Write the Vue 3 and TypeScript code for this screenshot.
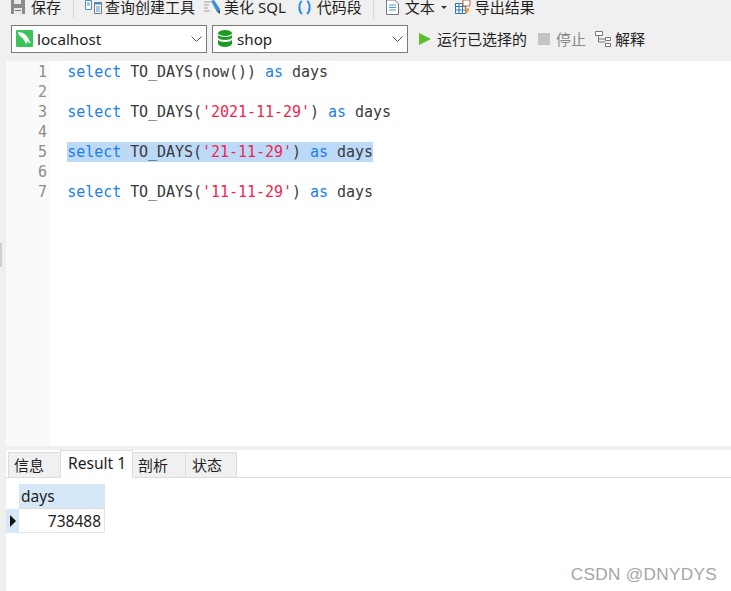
<script setup lang="ts">
type Tok = { t: string; c: string }
const K = 'kw', P = 'pl', S = 'st'
const mk = (d: string): Tok[] => [
  { t: 'select', c: K }, { t: ' TO_DAYS(', c: P },
  ...(d ? [{ t: `'${d}'`, c: S }] : [{ t: 'now()', c: P }]),
  { t: ')', c: P }, { t: ' ', c: P }, { t: 'as', c: K }, { t: ' days', c: P },
]
const lines: { toks: Tok[]; sel?: boolean }[] = [
  { toks: mk('') }, { toks: [] },
  { toks: mk('2021-11-29') }, { toks: [] },
  { toks: mk('21-11-29'), sel: true }, { toks: [] },
  { toks: mk('11-11-29') },
]
</script>

<template>
  <div class="app">
    <div class="bar1">
      <span class="tool t-save">
        <svg width="14" height="14" viewBox="0 0 14 14"><path d="M0 0h14v14H0z" fill="#8a8a8a"/><path d="M3 0h7v4H3z" fill="#e8e8e8"/><path d="M3 8h8v6H3z" fill="#e8e8e8"/><path d="M4 10h6v1H4z" fill="#777"/></svg>
        <span>保存</span>
      </span>
      <i class="sep"></i>
      <span class="tool t-q">
        <svg width="17" height="14" viewBox="0 0 17 14"><path d="M.5.500h6v9h-6z" fill="#fff" stroke="#4a8fd0"/><path d="M2 3h3M2 5h3" stroke="#4a8fd0"/><path d="M9.500 2.500h7v11h-7z" fill="#fff" stroke="#777"/><path d="M9.500 2.500h7v2h-7z" fill="#4a8fd0"/><path d="M11 7h4M11 9h4M11 11h4" stroke="#4a8fd0"/></svg>
        <span>查询创建工具</span>
      </span>
      <span class="tool t-b">
        <svg width="17" height="15" viewBox="0 0 17 15"><path d="M0 2h7M0 5h5M0 8h4M0 11h6" stroke="#a5a5a5"/><path d="M7 1l3-1 6 9-3 3z" fill="#3c8ed8"/><path d="M13 12l3-3 0 5z" fill="#555"/></svg>
        <span>美化 SQL</span>
      </span>
      <span class="tool t-c">
        <svg width="15" height="15" viewBox="0 0 15 15" fill="none" stroke="#2f8de4" stroke-width="2"><path d="M5 1C1.500 3 1.500 11 5 14"/><path d="M10 1c3.500 2 3.500 10 0 13"/></svg>
        <span>代码段</span>
      </span>
      <i class="sep s2"></i>
      <span class="tool t-t">
        <svg width="13" height="15" viewBox="0 0 13 15"><path d="M.5 0h8l4 4v10.500H.5z" fill="#fff" stroke="#777"/><path d="M3 5h7M3 7.500h7M3 10h7" stroke="#4a9ae0"/></svg>
        <span>文本</span>
        <i class="caret"></i>
      </span>
      <span class="tool t-e">
        <svg width="17" height="15" viewBox="0 0 17 15"><path d="M.5 3.500h10v10H.5z" fill="#fff" stroke="#2d78c0"/><path d="M.5 3.500h10v3H.5zM4 3.500v10M7.500 3.500v10M.5 10h10" fill="none" stroke="#2d78c0"/><path d="M8 0h7v6H8z" fill="#fff" stroke="#d0603a"/><path d="M13 8v3h-3M10 11l2-2M10 11l2 2" fill="none" stroke="#f0912a" stroke-width="1.500"/></svg>
        <span>导出结果</span>
      </span>
    </div>

    <div class="bar2">
      <div class="sel s-host">
        <svg class="ic" width="17" height="17" viewBox="0 0 17 17"><rect width="17" height="17" rx="1" fill="#3cc45c"/><path d="M2 2c4 0 8 2 10 6 1 2 2 4 3 5-2 0-3-1-4-2 0 1 0 2-1 3-1-3-3-6-6-8-1-1-2-2-2-4z" fill="#fff"/></svg>
        <span class="val">localhost</span>
        <svg class="chev" width="11" height="6" viewBox="0 0 11 6" fill="none" stroke="#555"><path d="M.5.500l5 5 5-5"/></svg>
      </div>
      <div class="sel s-db">
        <svg class="ic" width="14" height="17" viewBox="0 0 14 17" fill="#1e9b24"><ellipse cx="7" cy="3" rx="7" ry="3"/><path d="M0 5c2 2.500 12 2.500 14 0v3c-2 2.500-12 2.500-14 0zM0 10c2 2.500 12 2.500 14 0v4c-2 4-12 4-14 0z"/></svg>
        <span class="val">shop</span>
        <svg class="chev" width="11" height="6" viewBox="0 0 11 6" fill="none" stroke="#555"><path d="M.5.500l5 5 5-5"/></svg>
      </div>
      <span class="act a-run"><i class="play"></i><span>运行已选择的</span></span>
      <span class="act a-stop"><i class="stop"></i><span>停止</span></span>
      <span class="act a-exp">
        <svg width="16" height="16" viewBox="0 0 16 16" fill="#fff" stroke="#777"><path d="M.5.500h7v4h-7zM10.500 6.500h5v3h-5zM10.500 12.500h5v3h-5z"/><path d="M3.500 4.500v6.500h7M3.500 8h7" fill="none"/></svg>
        <span>解释</span>
      </span>
    </div>

    <div class="main">
      <div class="strip"><i class="grip"></i></div>
      <div class="body">
        <div class="editor">
          <div class="gutter">
            <div v-for="(_, i) in lines" :key="i" class="num">{{ i + 1 }}</div>
          </div>
          <div class="code">
            <div v-for="(l, i) in lines" :key="i" class="line">
              <span :class="{ sel2: l.sel }"><span v-for="(k, j) in l.toks" :key="j" :class="k.c">{{ k.t }}</span></span>
            </div>
          </div>
        </div>
        <div class="split"></div>
        <div class="tabs">
          <span class="tab first">信息</span>
          <span class="tab active">Result 1</span>
          <span class="tab t3">剖析</span>
          <span class="tab t4">状态</span>
        </div>
        <div class="results">
          <div class="grid">
            <div class="corner"></div><div class="head">days</div>
            <div class="mark"><i class="tri"></i></div><div class="cell">738488</div>
          </div>
          <div class="wm">CSDN @DNYDYS</div>
        </div>
      </div>
    </div>
  </div>
</template>

<style>
html, body { margin: 0; background: #f0f0f0; }
</style>

<style scoped>
.app { width: 731px; height: 591px; overflow: hidden; background: #f0f0f0; display: flex; flex-direction: column; font-family: "Noto Sans", "Noto Sans CJK SC", sans-serif; font-size: 15px; color: #1e1e1e; }
.bar1 { height: 18px; flex: none; display: flex; align-items: flex-end; overflow: hidden; position: relative; }
.tool { display: inline-flex; align-items: center; height: 24px; line-height: 24px; white-space: nowrap; margin-bottom: -1px; flex: none; }
.tool svg { flex: none; }
.sep { width: 1px; height: 18px; background: #d6d6d6; flex: none; }
.t-save { margin-left: 11px; gap: 6px; }
.bar1 > .sep { margin-left: 12px; }
.t-q { margin-left: 11px; gap: 3px; }
.t-b { margin-left: 9px; gap: 3px; }
.t-c { margin-left: 11px; gap: 5px; }
.bar1 > .s2 { margin-left: 11px; }
.t-t { margin-left: 12px; gap: 6px; }
.caret { width: 0; height: 0; border: 3px solid transparent; border-top: 3px solid #333; border-bottom: 0; }
.t-e { margin-left: 8px; gap: 3px; }
.bar2 { height: 43px; flex: none; display: flex; align-items: center; padding-bottom: 2px; box-sizing: border-box; padding-left: 11px; }
.sel { height: 28px; box-sizing: border-box; border: 1px solid #7a7a7a; background: #fff; display: flex; align-items: center; flex: none; font-size: 15.200px; }
.s-host { width: 196px; padding-left: 4px; gap: 4px; }
.s-db { width: 196px; margin-left: 5px; padding-left: 5px; gap: 5px; }
.val { flex: 1; }
.chev { margin-right: 4px; }
.act { display: inline-flex; align-items: center; white-space: nowrap; flex: none; }
.a-run { margin-left: 11px; gap: 6px; }
.play { width: 0; height: 0; border-left: 12px solid #5cbf2a; border-top: 6px solid transparent; border-bottom: 6px solid transparent; }
.a-stop { margin-left: 11px; gap: 6px; color: #8a8a8a; }
.stop { width: 12px; height: 12px; background: #c4c4c4; }
.a-exp { margin-left: 9px; gap: 4px; }
.main { flex: 1; display: flex; min-height: 0; }
.strip { width: 6px; flex: none; position: relative; }
.grip { position: absolute; left: 0; top: 182px; width: 2px; height: 24px; background: #cfcfcf; }
.body { flex: 1; display: flex; flex-direction: column; min-width: 0; }
.editor { height: 385px; flex: none; background: #fff; display: flex; font-family: "DejaVu Sans Mono", monospace; font-size: 15px; line-height: 20px; }
.gutter { width: 44px; flex: none; background: #fafafa; color: #8c8c8c; text-align: right; box-sizing: border-box; padding: 1px 3px 0 0; }
.num { height: 20px; }
.code { padding: 1px 0 0 17.200px; flex: 1; color: #3a3a3a; letter-spacing: -.04px; }
.line { height: 20px; white-space: pre; }
.kw { color: #1d80e8; }
.st { color: #f0264e; }
.sel2 { background: #bcd9f7; display: inline-block; height: 20px; }
.split { height: 4px; flex: none; }
.tabs { height: 27px; flex: none; background: #fff; border-bottom: 1px solid #dcdcdc; display: flex; align-items: flex-end; padding-left: 2px; position: relative; }
.tab { height: 25px; box-sizing: border-box; background: #f0f0f0; border: 1px solid #dcdcdc; border-bottom: 0; display: flex; align-items: center; flex: none; line-height: 1; }
.first { width: 52px; border-right: 0; padding-left: 5px; }
.active { width: 73px; background: #fff; position: relative; margin-bottom: -1px; height: 28px; padding-left: 7px; font-size: 15.600px; padding-bottom: 1px; }
.t3 { width: 52px; border-left: 0; border-right: 0; padding-left: 5px; }
.t4 { width: 52px; padding-left: 6px; }
.results { flex: 1; background: #fff; position: relative; }
.grid { display: grid; grid-template-columns: 13px 86px; grid-template-rows: 25px 24px; margin-top: 6px; font-size: 15.500px; }
.corner { background: #fff; }
.head { background: #d6e8f8; border-bottom: 1px solid #ddd; padding-left: 2px; display: flex; align-items: center; box-sizing: border-box; }
.mark { background: #d6e8f8; display: flex; align-items: center; justify-content: center; }
.tri { width: 0; height: 0; border-left: 6px solid #111; border-top: 6px solid transparent; border-bottom: 6px solid transparent; }
.cell { background: #fff; border-right: 1px solid #e4e4e4; border-bottom: 1px solid #e4e4e4; padding-right: 3px; box-sizing: border-box; display: flex; align-items: center; justify-content: flex-end; }
.wm { position: absolute; right: 14px; bottom: 6px; font-family: "Liberation Sans", sans-serif; font-size: 17.200px; color: #a6a6a6; letter-spacing: .3px; }
</style>
